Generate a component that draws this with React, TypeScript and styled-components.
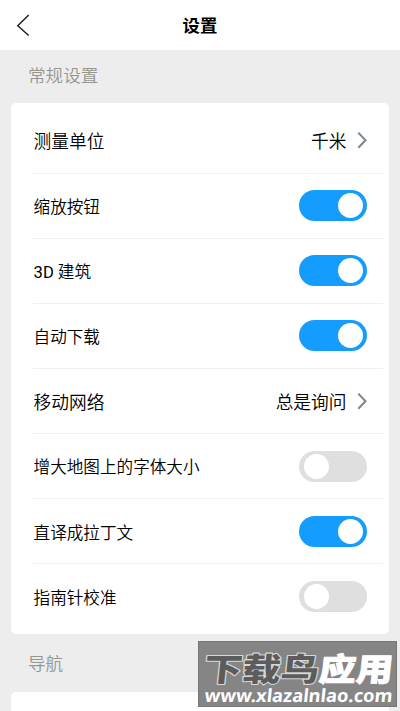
import React from "react";
import styled, { createGlobalStyle } from "styled-components";

const GlobalStyle = createGlobalStyle`
  * { box-sizing: border-box; }
  html, body { margin: 0; height: 711px; overflow: hidden; background: #ededed; }
  body { font-family: Roboto, "Noto Sans CJK SC", sans-serif; color: #000; }
`;

const Screen = styled.div`
  position: relative;
  display: flex;
  flex-direction: column;
  width: 400px;
  height: 711px;
  overflow: hidden;
  background: #ededed;
`;

const Header = styled.header`
  flex: none;
  display: grid;
  grid-template-columns: 50px 1fr 50px;
  align-items: center;
  height: 50px;
  background: #fff;
`;

const BackButton = styled.button`
  display: flex;
  width: 50px;
  height: 50px;
  padding: 13px 0 0 15px;
  border: 0;
  background: none;
`;

const Title = styled.h1`
  margin: 2px 0 0;
  font-size: 17.4px;
  line-height: 26px;
  font-weight: 700;
  text-align: center;
  color: #000;
`;

const SectionTitle = styled.h2<{ $height: number; $line: number }>`
  flex: none;
  margin: 0;
  padding-left: 28px;
  height: ${(p) => p.$height}px;
  line-height: ${(p) => p.$line}px;
  font-size: 17.6px;
  font-weight: 350;
  color: #969690;
`;

const Card = styled.section`
  flex: none;
  margin: 0 11px;
  padding: 5.4px 6px 4.8px 22px;
  border-radius: 5px;
  background: #fff;
`;

const Row = styled.div`
  display: flex;
  align-items: center;
  justify-content: space-between;
  height: 65.15px;
  padding-right: 16px;
  border-bottom: 1px solid #f0f0f0;
  &:last-child { border-bottom-color: transparent; }
`;

const Label = styled.span<{ $large?: boolean }>`
  font-size: ${(p) => (p.$large ? 17.7 : 16.6)}px;
  font-weight: 350;
  line-height: 26px;
  margin-top: ${(p) => (p.$large ? 3.4 : 4.4)}px;
  margin-left: 0.6px;
  white-space: nowrap;
`;

const Latin = styled.span`
  font-weight: 400;
`;

const Choice = styled.div`
  display: flex;
  align-items: center;
  gap: 9.6px;
`;

const Track = styled.div<{ $on: boolean }>`
  display: flex;
  align-items: center;
  justify-content: ${(p) => (p.$on ? "flex-end" : "flex-start")};
  width: 67.6px;
  height: 31px;
  padding: 0 4.5px;
  border-radius: 16px;
  background: ${(p) => (p.$on ? "#149dff" : "#dfdfdf")};
`;

const Knob = styled.div`
  width: 25px;
  height: 25px;
  border-radius: 50%;
  background: #fff;
`;

const Watermark = styled.div`
  position: absolute;
  left: 198px;
  top: 641px;
  width: 199px;
  height: 66px;
  background: #858585;
  border: 1px solid #777;
`;

const BrandArt = styled.svg`
  display: block;
  width: 197px;
  height: 64px;
`;

const Brand = styled.text<{ $dark?: boolean }>`
  font-family: "Noto Sans CJK SC", sans-serif;
  font-weight: 900;
  font-size: 32px;
  fill: ${(p) => (p.$dark ? "#5c5c5c" : "#fff")};
  stroke: ${(p) => (p.$dark ? "#d8d8d8" : "#fff")};
  stroke-width: ${(p) => (p.$dark ? 2.2 : 0.8)}px;
  stroke-linejoin: round;
  paint-order: stroke;
`;

const Site = styled.text`
  font-family: "Noto Sans", sans-serif;
  font-weight: 700;
  font-size: 18px;
  fill: #fff;
`;

type Setting = { label: string; latin?: string; value?: string; on?: boolean };

const settings: Setting[] = [
  { label: "测量单位", value: "千米" },
  { label: "缩放按钮", on: true },
  { latin: "3D", label: " 建筑", on: true },
  { label: "自动下载", on: true },
  { label: "移动网络", value: "总是询问" },
  { label: "增大地图上的字体大小", on: false },
  { label: "直译成拉丁文", on: true },
  { label: "指南针校准", on: false },
];

function SettingRow({ label, latin, value, on = false }: Setting) {
  return (
    <Row>
      <Label $large={!!value}>
        {latin && <Latin>{latin}</Latin>}
        {label}
      </Label>
      {value ? (
        <Choice>
          <Label $large>{value}</Label>
          <svg width="11" height="18" viewBox="0 0 11 18" fill="none" stroke="#7b8790" strokeWidth="2">
            <path d="M2.3 1.6L9.5 9.2L2.3 16.8" />
          </svg>
        </Choice>
      ) : (
        <Track $on={on}><Knob /></Track>
      )}
    </Row>
  );
}

export default function App() {
  return (
    <>
      <GlobalStyle />
      <Screen>
        <Header>
          <BackButton aria-label="返回">
            <svg width="16" height="24" viewBox="0 0 16 24" fill="none" stroke="#222" strokeWidth="1.5">
              <path d="M13.7 2L2.8 12.7L13.7 22.5" />
            </svg>
          </BackButton>
          <Title>设置</Title>
        </Header>
        <SectionTitle $height={53} $line={53}>常规设置</SectionTitle>
        <Card>
          {settings.map((s) => <SettingRow key={s.label} {...s} />)}
        </Card>
        <SectionTitle $height={57.4} $line={61}>导航</SectionTitle>
        <Card>
          <Row />
        </Card>
        <Watermark>
          <BrandArt viewBox="0 0 197 64">
            <g transform="translate(0 38.5) skewX(-6)">
              <Brand $dark x="4" y="0" textLength="115" lengthAdjust="spacingAndGlyphs">下载鸟</Brand>
              <Brand x="119" y="0" textLength="74" lengthAdjust="spacingAndGlyphs">应用</Brand>
            </g>
            <g transform="translate(0 59.5) skewX(-6)">
              <Site x="5" y="0" textLength="188" lengthAdjust="spacingAndGlyphs">www.xlazalnlao.com</Site>
            </g>
          </BrandArt>
        </Watermark>
      </Screen>
    </>
  );
}
